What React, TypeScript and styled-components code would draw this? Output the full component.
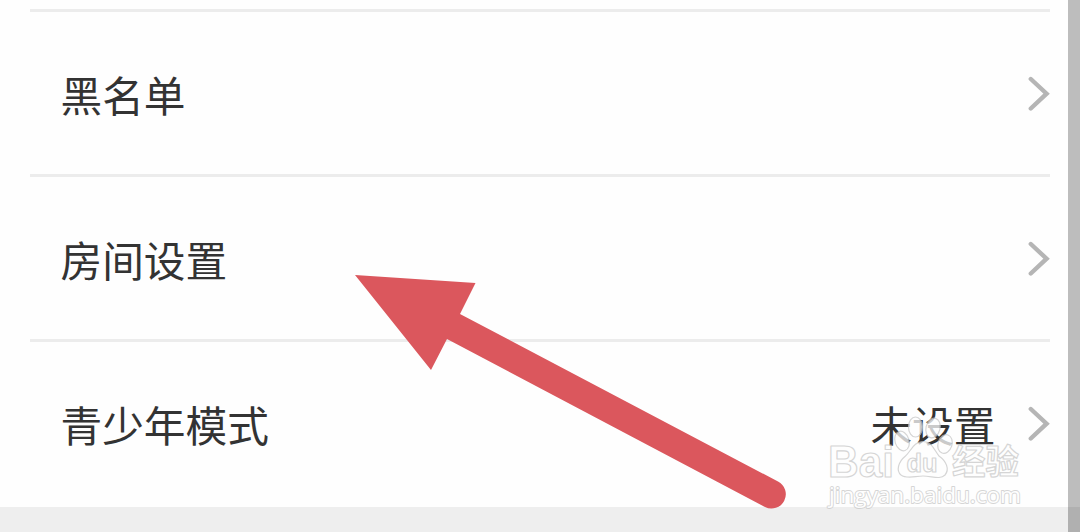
import React from 'react';
import styled, { createGlobalStyle } from 'styled-components';

const GlobalStyle = createGlobalStyle`
  * { box-sizing: border-box; }
  body {
    margin: 0;
    background: #fefefe;
    overflow: hidden;
    font-family: "Noto Sans CJK SC", "Noto Sans", sans-serif;
  }
`;

const Page = styled.div`
  position: relative;
  display: flex;
  width: 1080px;
  height: 532px;
  overflow: hidden;
  background: #fefefe;
`;

const Content = styled.main`
  display: flex;
  flex-direction: column;
  width: 1068px;
  padding-top: 9px;
`;

const Edge = styled.div`
  display: flex;
  flex-direction: column;
  justify-content: flex-end;
  width: 12px;
  background: #bdbdbd;
`;

const EdgeFoot = styled.div`
  height: 25px;
  background: #b0b0b0;
`;

const Row = styled.div`
  display: flex;
  align-items: center;
  height: 165px;
  margin: 0 18px 0 30px;
  padding: 1px 0 0 30.5px;
  border-top: 3px solid #ececec;
`;

const Label = styled.span`
  flex: 1;
  font-size: 41.7px;
  line-height: 60px;
  color: #333;
  white-space: nowrap;
`;

const Value = styled(Label)`
  flex: none;
  margin-right: 32.5px;
`;

const Chevron = styled.svg`
  flex: none;
  width: 22px;
  height: 38px;
`;

const Footer = styled.footer`
  flex: 1;
  margin-top: 3px;
  background: #eee;
`;

const Pointer = styled.svg`
  position: absolute;
  left: 350px;
  top: 268px;
  width: 445px;
  height: 246px;
`;

const Watermark = styled.svg`
  position: absolute;
  left: 820px;
  top: 408px;
  width: 210px;
  height: 106px;
`;

const Brand = styled.text`
  font-family: "Liberation Sans", sans-serif;
  font-weight: 700;
`;

const BrandHan = styled.text`
  font-family: "Noto Sans CJK SC", sans-serif;
  font-weight: 700;
  font-size: 34px;
`;

const Address = styled.text`
  font-family: "Open Sans", "Noto Sans", sans-serif;
  font-size: 21.5px;
  paint-order: stroke;
`;

type Item = { label: string; value?: string };

const items: Item[] = [
  { label: '黑名单' },
  { label: '房间设置' },
  { label: '青少年模式', value: '未设置' },
];

function Arrow() {
  return (
    <Chevron viewBox="0 0 22 38" fill="none">
      <path d="M2.8 4 L18.6 18.7 L2.8 33.5" stroke="#b5b5b5" strokeWidth="4.4" strokeLinecap="round" />
    </Chevron>
  );
}

export default function App() {
  return (
    <>
      <GlobalStyle />
      <Page>
        <Content>
          {items.map((item) => (
            <Row key={item.label}>
              <Label>{item.label}</Label>
              {item.value && <Value>{item.value}</Value>}
              <Arrow />
            </Row>
          ))}
          <Footer />
        </Content>
        <Edge>
          <EdgeFoot />
        </Edge>
        <Pointer viewBox="350 268 445 246">
          <path
            d="M355 275 L475.5 283 L460 314 L778 481.5 A14.2 14.2 0 0 1 765 507 L447 339 L431 370 Z"
            fill="#db575d"
          />
        </Pointer>
        <Watermark viewBox="820 408 210 106">
          <g fill="#fff" stroke="#c8c8c8" strokeWidth="1.2" strokeLinejoin="round" opacity="0.74">
            <ellipse cx="902" cy="441" rx="7" ry="10" transform="rotate(-18 902 441)" />
            <ellipse cx="915.5" cy="427" rx="7" ry="10" />
            <ellipse cx="933" cy="428" rx="7" ry="10" transform="rotate(14 933 428)" />
            <ellipse cx="945" cy="444" rx="7" ry="9.5" transform="rotate(18 945 444)" />
            <path d="M923 441.5 C914 441.5 911 451 905.5 456 C898 462 896 471 901 475 C907 479.5 915 476 923 476 C932 476 940 480 945 475 C950 469 946 461 939 456 C934 450 932 441.5 923 441.5 Z" />
            <Brand x="828" y="477" fontSize="45" textLength="66" lengthAdjust="spacingAndGlyphs">Bai</Brand>
            <Brand x="906.5" y="471.5" fontSize="26" textLength="31" lengthAdjust="spacingAndGlyphs">du</Brand>
            <BrandHan x="952" y="473.5" textLength="67" lengthAdjust="spacingAndGlyphs">经验</BrandHan>
            <Address x="829" y="502.5" strokeWidth="1.8" textLength="192" lengthAdjust="spacingAndGlyphs">jingyan.baidu.com</Address>
          </g>
        </Watermark>
      </Page>
    </>
  );
}
